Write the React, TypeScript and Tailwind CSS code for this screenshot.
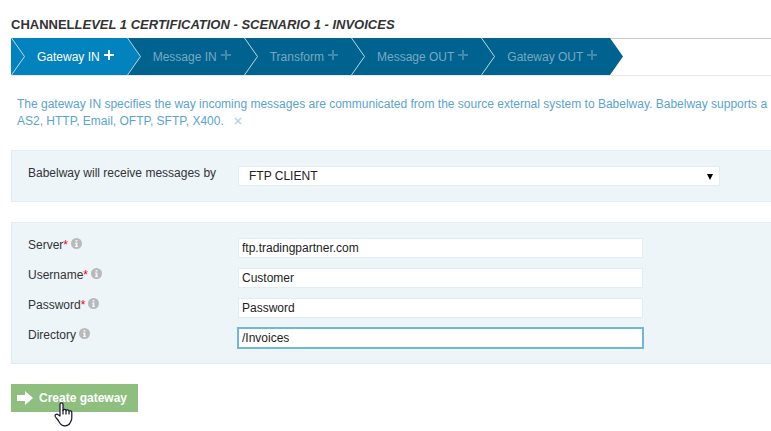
import React from "react";

const steps = [
  { label: "Gateway IN", active: true },
  { label: "Message IN", active: false },
  { label: "Transform", active: false },
  { label: "Message OUT", active: false },
  { label: "Gateway OUT", active: false },
];

const fields = [
  { id: "server", label: "Server", required: true, value: "ftp.tradingpartner.com" },
  { id: "username", label: "Username", required: true, value: "Customer" },
  { id: "password", label: "Password", required: true, value: "Password" },
  { id: "directory", label: "Directory", required: false, value: "/Invoices" },
];

function StepArrow({ left, right }: { left: string; right: string }) {
  return (
    <svg width="14" height="37" viewBox="0 0 14 37" className="shrink-0" aria-hidden="true">
      <path d="M0 0L13.5 18.5L0 37Z" fill={left} />
      <path d="M0 0H14V37H0L13.5 18.5Z" fill={right} />
      <path d="M0.5 0L13.5 18.5L0.5 37" fill="none" stroke="#b9d9e8" strokeWidth="1" />
    </svg>
  );
}

function Plus() {
  return (
    <svg width="10" height="10" viewBox="0 0 10 10" aria-hidden="true">
      <path d="M5 0V10M0 5H10" stroke="currentColor" strokeWidth="2" />
    </svg>
  );
}

function Info() {
  return (
    <svg width="11" height="11" viewBox="0 0 11 11" className="mb-[3px] ml-[3px]" aria-hidden="true">
      <circle cx="5.5" cy="5.5" r="5.5" fill="#b9b9b9" />
      <path d="M4.6 2H6.4V3.6H4.6ZM4 4.5H6.4V8H7V9H4V8H4.6V5.5H4Z" fill="#edf5f9" />
    </svg>
  );
}

function Pointer() {
  return (
    <svg
      width="19"
      height="25"
      viewBox="0 0 19 25"
      className="pointer-events-none absolute left-[43px] top-[18px]"
      aria-hidden="true"
    >
      <path
        d="M6 14V2.3C6 0.3 9 0.3 9 2.3V8.5C9.5 6.8 12 7 12 8.6C12.6 7.5 15 7.7 15 9.3C15.8 8.4 17.8 8.8 17.8 10.5V16C17.8 18.5 16.5 19.5 16 21C15 23.2 13 23.8 11 23.8C8 23.8 6.5 22.5 5.5 20.5C4.5 18.3 3 17 1.5 15C0.3 13 2.5 11.3 4.2 12.8Z"
        fill="#fff"
        stroke="#16162a"
        strokeWidth="1.2"
        strokeLinejoin="round"
      />
      <path d="M9 8V12.5M12 8.6V12.5M15 9.5V12.5" stroke="#16162a" strokeWidth="1.2" />
    </svg>
  );
}

export default function App() {
  return (
    <main className="overflow-hidden pb-4 pl-[11px] pt-[17px] font-['Liberation_Sans',Arial,sans-serif] text-xs text-[#333]">
      <h1 className="whitespace-nowrap text-[13px] font-bold leading-4">
        CHANNEL<em>LEVEL 1 CERTIFICATION - SCENARIO 1 - INVOICES</em>
      </h1>

      <nav className="mt-[5px] flex h-[38px] border-b border-[#e8e8e8]">
        {steps.map((step, i) => (
          <a
            key={step.label}
            href="#"
            aria-current={step.active ? "step" : undefined}
            className={
              step.active
                ? "flex h-[37px] shrink-0 items-center bg-[#0383bd] text-white"
                : "flex h-[37px] shrink-0 items-center bg-[#00628e] text-[#78a9c1]"
            }
          >
            <StepArrow left={i < 2 ? "#0383bd" : "#00628e"} right={step.active ? "#0383bd" : "#00628e"} />
            <span className="ml-3 mr-1">{step.label}</span>
            <span className={step.active ? "mb-[3px] mr-[13px]" : "mb-[3px] mr-[13px] text-[#4389ab]"}>
              <Plus />
            </span>
          </a>
        ))}
        <span className="flex-1 border-t border-[#c8cccd]">
          <svg width="13" height="37" viewBox="0 0 13 37" className="-mt-px" aria-hidden="true">
            <path d="M0 0L13 18.5L0 37Z" fill="#00628e" />
          </svg>
        </span>
      </nav>

      <p className="mt-5 whitespace-nowrap pl-[6px] leading-[17px] text-[#5ba4cf]">
        The gateway IN specifies the way incoming messages are communicated from the source external system to
        Babelway. Babelway supports a
        <br />
        AS2, HTTP, Email, OFTP, SFTP, X400.
        <button type="button" aria-label="Close" className="ml-[10px] text-[#b5d5e6]">
          <svg width="8" height="8" viewBox="0 0 8 8" aria-hidden="true">
            <path d="M1 1L7 7M7 1L1 7" stroke="currentColor" strokeWidth="1.6" />
          </svg>
        </button>
      </p>

      <form>
        <section className="mt-5 flex border border-r-0 border-[#dfedf5] bg-[#edf5f9] py-[15px] pl-4">
          <label htmlFor="gateway" className="w-[210px] shrink-0 leading-[14px]">
            Babelway will receive messages by
          </label>
          <div className="relative mr-4 w-full max-w-[482px]">
            <select
              id="gateway"
              className="block h-5 w-full appearance-none border border-[#dfedf5] bg-white pl-[10px] text-xs text-[#222]"
            >
              <option>FTP CLIENT</option>
            </select>
            <svg
              width="6"
              height="6"
              viewBox="0 0 6 6"
              className="pointer-events-none absolute right-[7px] top-2"
              aria-hidden="true"
            >
              <path d="M0 0H6L3 6Z" fill="#000" />
            </svg>
          </div>
        </section>

        <section className="mt-5 flex flex-col gap-[10px] border border-r-0 border-[#dfedf5] bg-[#edf5f9] py-[15px] pl-4">
          {fields.map((field) => (
            <div key={field.id} className="flex">
              <label htmlFor={field.id} className="flex h-[14px] w-[210px] shrink-0 items-center leading-[14px]">
                {field.label}
                {field.required && <span className="text-[#f00]">*</span>}
                <Info />
              </label>
              <input
                id={field.id}
                type="text"
                defaultValue={field.value}
                className={
                  field.id === "directory"
                    ? "mr-4 h-5 w-full max-w-[405px] border border-[#6fb8d9] bg-white px-[3px] text-xs text-[#222] outline-1 outline-[#6fb8d9]"
                    : "mr-4 h-5 w-full max-w-[405px] border border-[#dfedf5] bg-white px-[3px] text-xs text-[#222]"
                }
              />
            </div>
          ))}
        </section>

        <div className="relative mt-5 flex">
          <button
            type="button"
            className="flex h-7 items-center gap-[6px] bg-[#8ebf7f] pl-[6px] pr-[11px] text-xs font-bold text-white"
          >
            <svg width="16" height="14" viewBox="0 0 16 14" aria-hidden="true">
              <path d="M0 4H8V0L16 7L8 14V10H0Z" fill="#fff" />
            </svg>
            Create gateway
          </button>
          <Pointer />
        </div>
      </form>
    </main>
  );
}
